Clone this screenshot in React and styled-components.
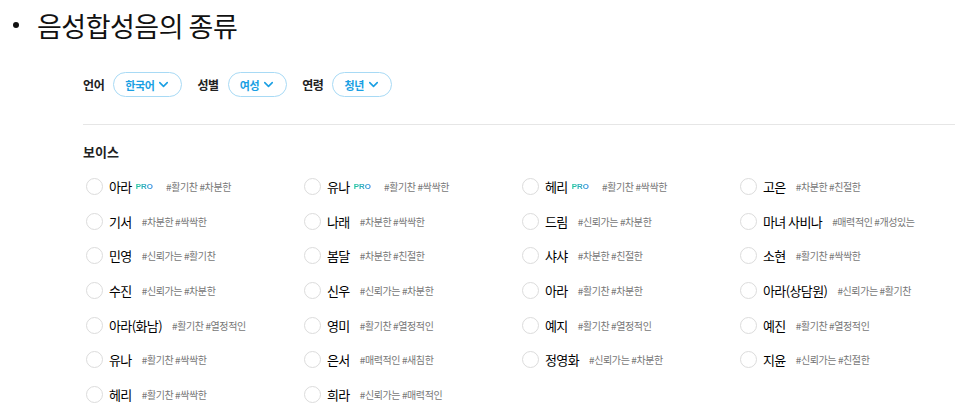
import React from "react";
import styled, { createGlobalStyle } from "styled-components";
import { ChevronDown } from "lucide-react";

const GlobalStyle = createGlobalStyle`
  body {
    margin: 0;
    background: #fff;
    font-family: "Noto Sans CJK KR", "Noto Sans", sans-serif;
    color: #222;
  }
`;

const Page = styled.div`
  width: 972px;
  height: 411px;
  overflow: hidden;
`;

const TitleRow = styled.div`
  display: flex;
  align-items: center;
  height: 50px;
  padding-left: 13px;
`;

const Dot = styled.span`
  width: 6px;
  height: 6px;
  border-radius: 50%;
  background: #111;
  margin-right: 18px;
`;

const Title = styled.h1`
  margin: 0;
  font-size: 27px;
  font-weight: 400;
  letter-spacing: -0.5px;
  color: #111;
`;

const Section = styled.div`
  padding: 0 17px 0 83px;
`;

const FilterBar = styled.div`
  display: flex;
  align-items: center;
  margin-top: 22px;
`;

const FilterLabel = styled.span`
  font-size: 12px;
  font-weight: 700;
  letter-spacing: -0.4px;
  margin-right: 9px;
`;

const Pill = styled.button`
  display: flex;
  align-items: center;
  gap: 2px;
  height: 25px;
  padding: 0 10px 0 11px;
  margin-right: 15px;
  border: 1px solid #a8daf5;
  border-radius: 13px;
  background: #fff;
  color: #1a9fe3;
  font-family: inherit;
  font-size: 11px;
  font-weight: 700;
  letter-spacing: -0.4px;
`;

const Divider = styled.hr`
  margin: 27px 0 0;
  border: 0;
  border-top: 1px solid #e6e6e6;
`;

const Heading = styled.h2`
  margin: 18px 0 0;
  font-size: 13px;
  font-weight: 700;
  line-height: 18px;
`;

const VoiceGrid = styled.div`
  display: grid;
  grid-template-columns: repeat(4, 218px);
  grid-auto-rows: 34.7px;
  margin-top: 8px;
  padding-left: 3px;
`;

const Voice = styled.label`
  display: flex;
  align-items: center;
  white-space: nowrap;
`;

const Radio = styled.span`
  width: 15px;
  height: 15px;
  border: 1px solid #dcdcdc;
  border-radius: 50%;
  margin-right: 6px;
  flex-shrink: 0;
`;

const Name = styled.span`
  font-size: 13px;
  font-weight: 400;
  letter-spacing: -0.6px;
  color: #000;
`;

const Pro = styled.span`
  margin-left: 4px;
  font-family: "Liberation Sans", sans-serif;
  font-size: 8px;
  font-weight: 700;
  background: linear-gradient(90deg, #1fc79a, #3a8ee8);
  -webkit-background-clip: text;
  background-clip: text;
  color: transparent;
`;

const Tags = styled.span`
  margin-left: ${props => (props.$pro ? 13 : 10)}px;
  font-size: 10px;
  letter-spacing: -0.4px;
  color: #777;
`;

const filters = [
  { label: "언어", value: "한국어" },
  { label: "성별", value: "여성" },
  { label: "연령", value: "청년" }
];

const voices = [
  ["아라", "#활기찬 #차분한", true],
  ["유나", "#활기찬 #싹싹한", true],
  ["헤리", "#활기찬 #싹싹한", true],
  ["고은", "#차분한 #친절한"],
  ["기서", "#차분한 #싹싹한"],
  ["나래", "#차분한 #싹싹한"],
  ["드림", "#신뢰가는 #차분한"],
  ["마녀 사비나", "#매력적인 #개성있는"],
  ["민영", "#신뢰가는 #활기찬"],
  ["봄달", "#차분한 #친절한"],
  ["샤샤", "#차분한 #친절한"],
  ["소현", "#활기찬 #싹싹한"],
  ["수진", "#신뢰가는 #차분한"],
  ["신우", "#신뢰가는 #차분한"],
  ["아라", "#활기찬 #차분한"],
  ["아라(상담원)", "#신뢰가는 #활기찬"],
  ["아라(화남)", "#활기찬 #열정적인"],
  ["영미", "#활기찬 #열정적인"],
  ["예지", "#활기찬 #열정적인"],
  ["예진", "#활기찬 #열정적인"],
  ["유나", "#활기찬 #싹싹한"],
  ["은서", "#매력적인 #새침한"],
  ["정영화", "#신뢰가는 #차분한"],
  ["지윤", "#신뢰가는 #친절한"],
  ["헤리", "#활기찬 #싹싹한"],
  ["희라", "#신뢰가는 #매력적인"]
];

export default function App() {
  return (
    <Page>
      <GlobalStyle />
      <TitleRow>
        <Dot />
        <Title>음성합성음의 종류</Title>
      </TitleRow>
      <Section>
        <FilterBar>
          {filters.map(f => (
            <React.Fragment key={f.label}>
              <FilterLabel>{f.label}</FilterLabel>
              <Pill>
                {f.value}
                <ChevronDown size={15} strokeWidth={2.5} />
              </Pill>
            </React.Fragment>
          ))}
        </FilterBar>
        <Divider />
        <Heading>보이스</Heading>
        <VoiceGrid>
          {voices.map(([name, tags, pro], i) => (
            <Voice key={i}>
              <Radio />
              <Name>{name}</Name>
              {pro && <Pro>PRO</Pro>}
              <Tags $pro={pro}>{tags}</Tags>
            </Voice>
          ))}
        </VoiceGrid>
      </Section>
    </Page>
  );
}
